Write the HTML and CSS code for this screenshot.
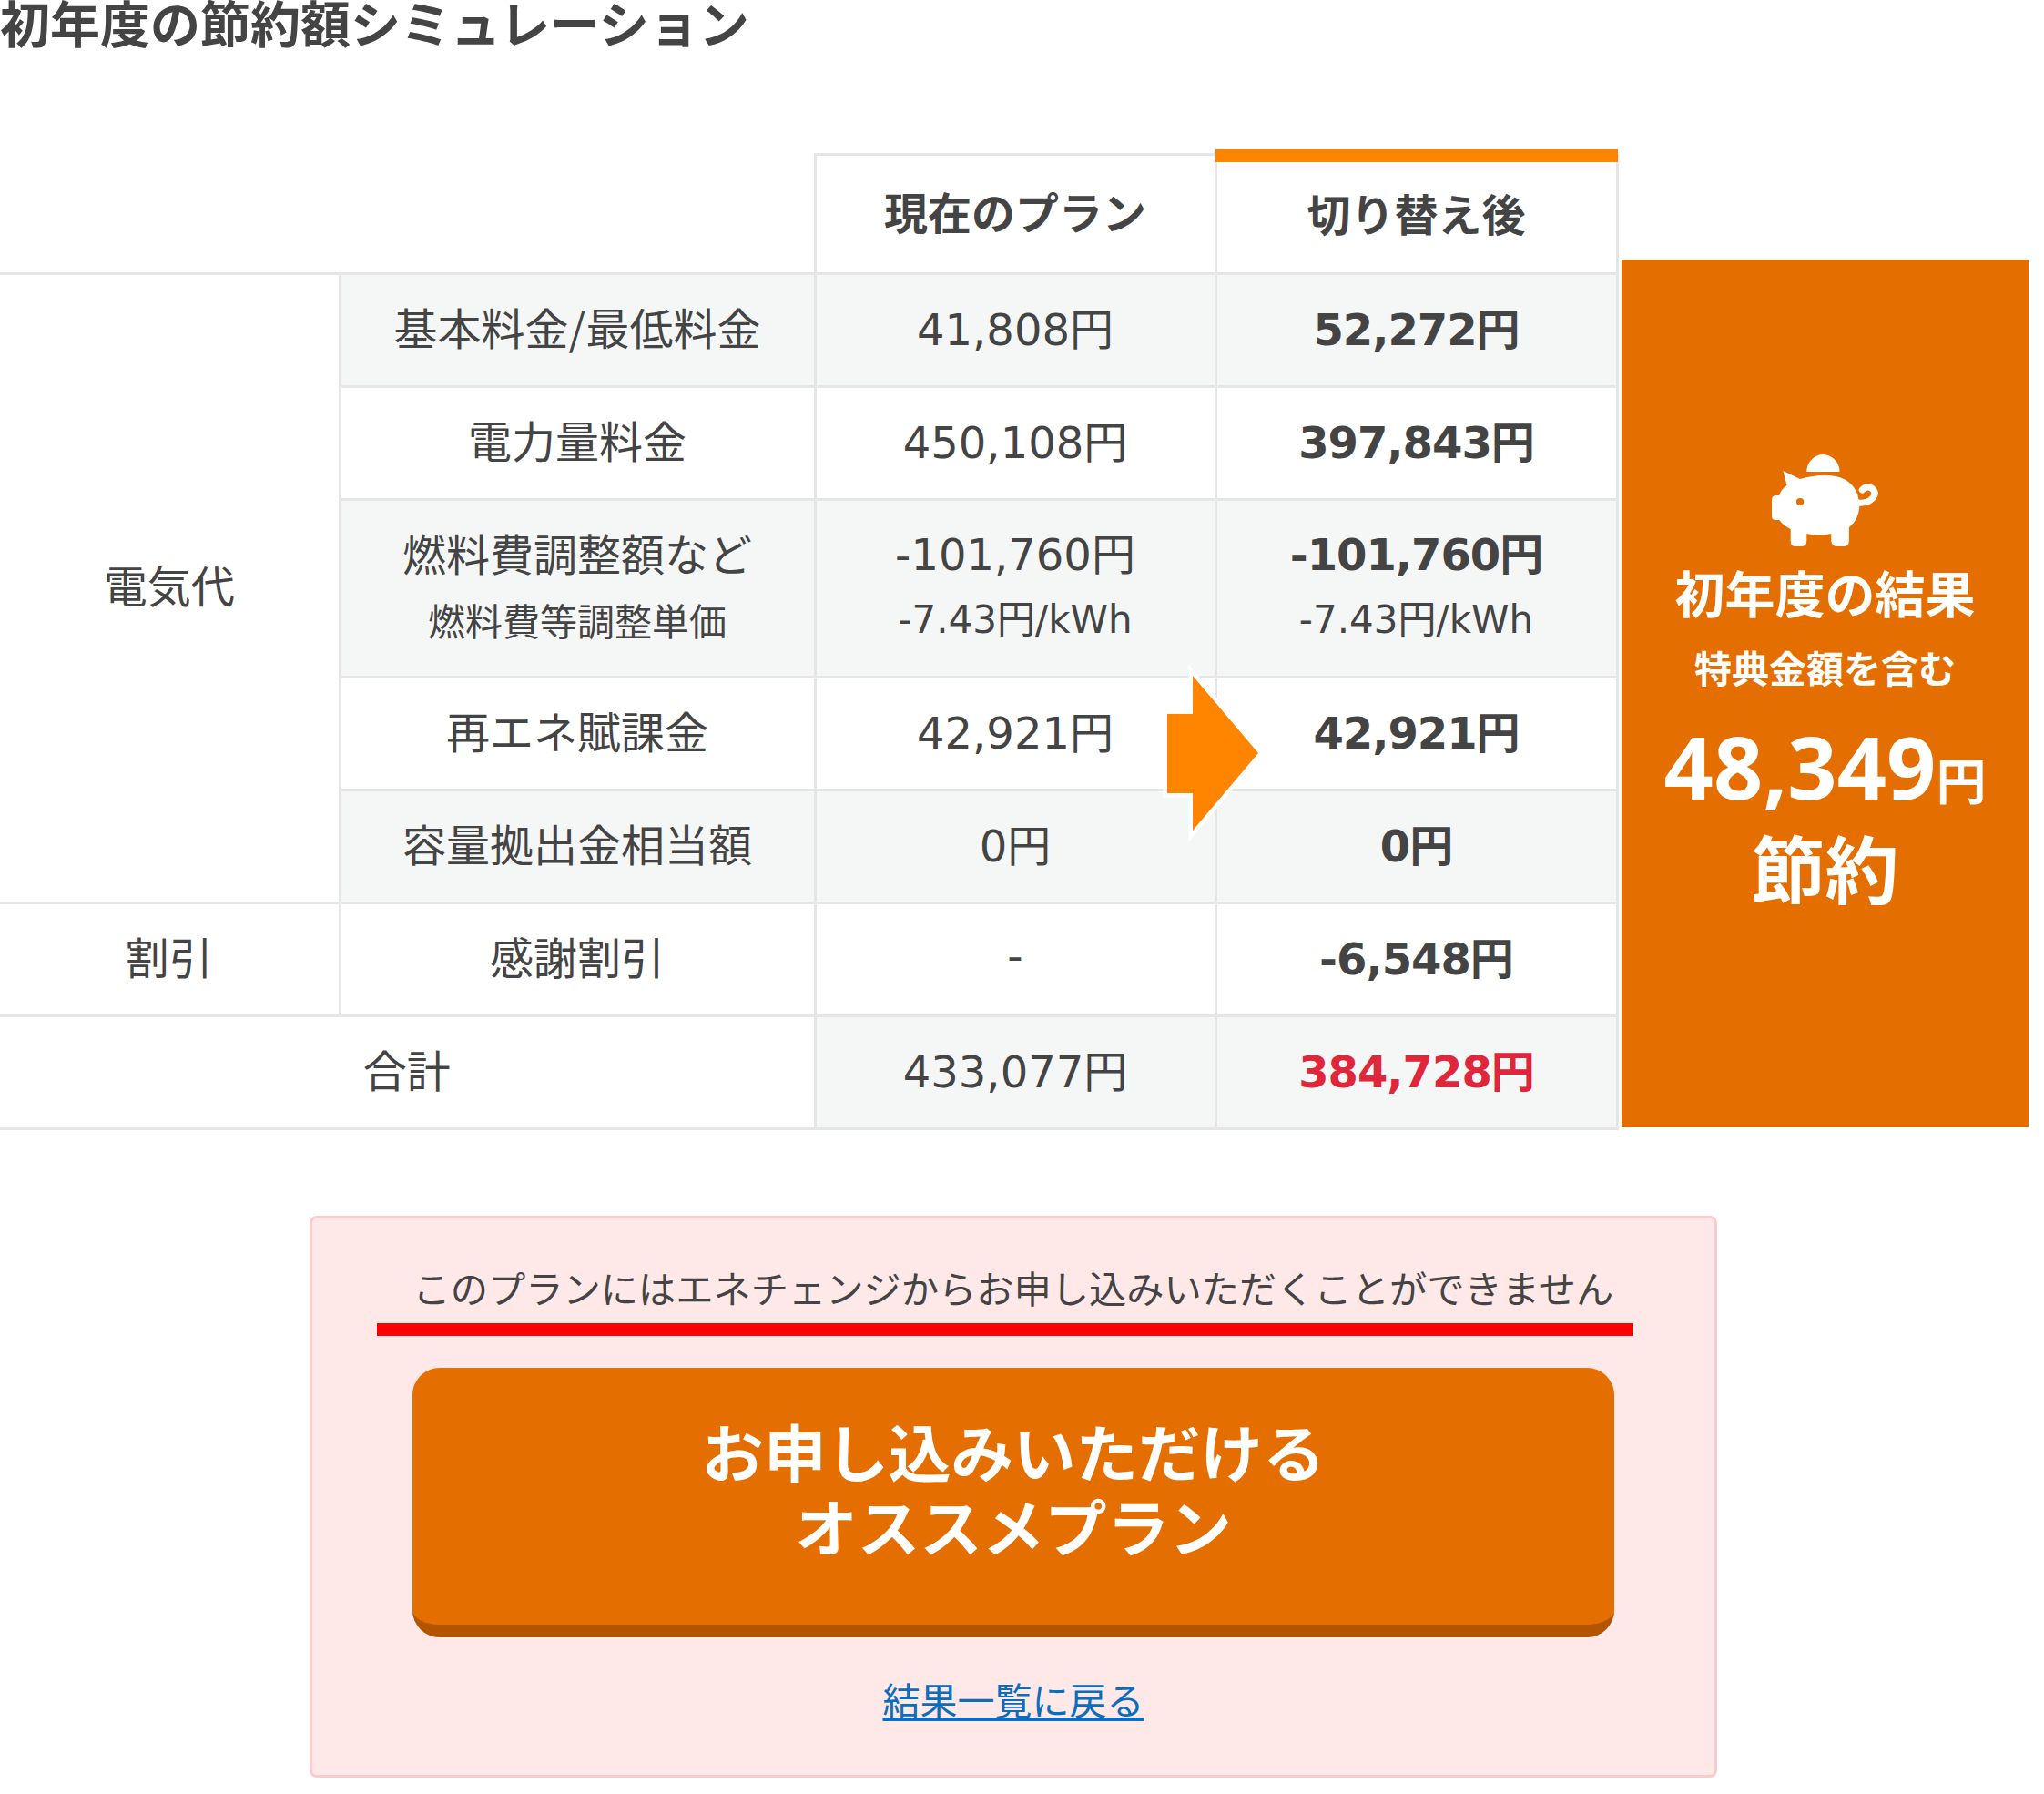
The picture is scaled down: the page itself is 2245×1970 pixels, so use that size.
FILE: index.html
```html
<!DOCTYPE html>
<html lang="ja">
<head>
<meta charset="utf-8">
<title>初年度の節約額シミュレーション</title>
<link rel="stylesheet" href="styles.css">
</head>
<body>
<main class="page">
  <h2 class="title">初年度の節約額シミュレーション</h2>
  <section class="result">
    <div class="table-wrap">
      <table class="sim">
        <colgroup><col class="c1"><col class="c2"><col class="c3"><col class="c4"></colgroup>
        <thead>
          <tr class="head">
            <th class="blank" colspan="2"></th>
            <th class="now">現在のプラン</th>
            <th class="after">切り替え後</th>
          </tr>
        </thead>
        <tbody>
          <tr class="alt">
            <td class="group" rowspan="5">電気代</td>
            <td class="item">基本料金/最低料金</td>
            <td>41,808円</td>
            <td class="new">52,272円</td>
          </tr>
          <tr>
            <td class="item">電力量料金</td>
            <td>450,108円</td>
            <td class="new">397,843円</td>
          </tr>
          <tr class="alt tall">
            <td class="item">燃料費調整額など<span class="sub">燃料費等調整単価</span></td>
            <td>-101,760円<span class="sub">-7.43円/kWh</span></td>
            <td class="new">-101,760円<span class="sub">-7.43円/kWh</span></td>
          </tr>
          <tr>
            <td class="item">再エネ賦課金</td>
            <td>42,921円</td>
            <td class="new">42,921円</td>
          </tr>
          <tr class="alt">
            <td class="item">容量拠出金相当額</td>
            <td>0円</td>
            <td class="new">0円</td>
          </tr>
          <tr>
            <td class="group">割引</td>
            <td class="item">感謝割引</td>
            <td>-</td>
            <td class="new">-6,548円</td>
          </tr>
          <tr class="alt total">
            <td class="sum-label" colspan="2">合計</td>
            <td>433,077円</td>
            <td class="new red">384,728円</td>
          </tr>
        </tbody>
      </table>
      <svg class="arrow" viewBox="0 0 120 200" aria-hidden="true">
        <polygon points="10,57 38,57 38,15 110,100 38,185 38,144 10,144" fill="#ff8400" stroke="#fff" stroke-width="9" paint-order="stroke"/>
      </svg>
    </div>
    <aside class="panel">
      <svg class="pig" viewBox="0 0 114 102" preserveAspectRatio="none" aria-hidden="true">
        <path fill="#fff" d="M37 19C37 8 46 0 54 0C63 0 72 8 72 19Z"/>
        <path fill="#fff" d="M12 18L30 27Q50 21 68 24Q93 30 93 58Q92 72 82 80L82 95Q82 101 76 101L69 101Q64 101 63 95L63 87Q50 90 37 87L37 95Q37 101 31 101L25 101Q20 101 20 95L20 82Q12 78 8 72L4 72Q0 72 0 68L0 50Q0 45 5 45L8 45Q10 38 16 34Z"/>
        <circle cx="30" cy="52" r="4" fill="#e56e00"/>
        <path fill="none" stroke="#fff" stroke-width="7" stroke-linecap="round" d="M91 53Q102 54 107 48Q112 42 106 37Q100 34 96 39"/>
      </svg>
      <p class="p-title">初年度の結果</p>
      <p class="p-sub">特典金額を含む</p>
      <p class="p-amount">48,349<span class="yen">円</span></p>
      <p class="p-save">節約</p>
    </aside>
  </section>
  <section class="notice">
    <p class="notice-text">このプランにはエネチェンジからお申し込みいただくことができません</p>
    <div class="mark"></div>
    <a class="cta" href="#">お申し込みいただける<br>オススメプラン</a>
    <a class="back" href="#">結果一覧に戻る</a>
  </section>
</main>
</body>
</html>
```
FILE: styles.css
```css
* { box-sizing: border-box; }
html, body { margin: 0; padding: 0; background: #fff; }
body {
  height: 1970px;
  overflow: hidden;
  color: #444;
  font-family: "DejaVu Sans", "Noto Sans CJK JP", sans-serif;
  font-size: 48px;
}
.page { width: 2229px; }
.title {
  margin: 0;
  height: 168px;
  font-family: "Noto Sans CJK JP", sans-serif;
  font-size: 55px;
  font-weight: 700;
  line-height: 46px;
  white-space: nowrap;
}
.result { display: flex; align-items: flex-end; gap: 5px; }
.table-wrap { position: relative; width: 1776px; flex: none; }
.sim {
  width: 1776px;
  table-layout: fixed;
  border-collapse: collapse;
  text-align: center;
}
.c1 { width: 373px; }
.c2 { width: 522px; }
.c3 { width: 440px; }
.c4 { width: 441px; }
.sim th, .sim td {
  border: 3px solid #e6e6e6;
  padding: 0;
  font-weight: 400;
  vertical-align: middle;
}
.sim td { padding-bottom: 10px; }
.sim tr > :first-child { border-left: 0; }
.head { height: 131px; }
.sim tbody tr { height: 124px; }
.sim tbody tr.tall { height: 195px; }
.sim tbody tr.tall td { padding-bottom: 17px; }
.sim .blank { border-top: 0; border-left: 0; }
.sim .now, .sim .after { font-weight: 700; font-family: "Noto Sans CJK JP", sans-serif; font-size: 48px; }
.sim .now { padding-bottom: 8px; }
.sim .after { position: relative; padding-bottom: 3px; border-top: 0; }
.sim .after::before {
  content: "";
  position: absolute;
  left: -2px;
  right: -2px;
  top: -6px;
  height: 14px;
  background: #ff8400;
}
.alt td { background: #f5f7f7; }
.sim .group, .sim .sum-label { background: #fff; font-family: "Noto Sans CJK JP", sans-serif; }
.sim .item { font-family: "Noto Sans CJK JP", sans-serif; }
.sim .new { font-weight: 700; letter-spacing: -1px; }
.sim .red { color: #e0263a; }
.sub { display: block; font-size: 41px; font-weight: 400; letter-spacing: 0; line-height: 50px; margin-top: 14px; }
.tall td:not(.item) .sub { font-size: 42px; margin-top: 16px; }
.arrow {
  position: absolute;
  left: 1272px;
  top: 559px;
  width: 120px;
  height: 200px;
}
.panel {
  flex: none;
  width: 447px;
  height: 953px;
  margin-bottom: 3px;
  padding-top: 214px;
  background: #e56e00;
  color: #fff;
  text-align: center;
  font-family: "Noto Sans CJK JP", sans-serif;
  font-weight: 700;
}
.pig { display: block; width: 118px; height: 102px; margin: 0 auto; }
.panel p { margin: 0; }
.panel .p-title { font-size: 55px; line-height: 70px; margin-top: 13px; }
.panel .p-sub { font-size: 41px; line-height: 60px; margin-top: 18px; }
.panel .p-amount { font-family: "Noto Sans", sans-serif; font-size: 95px; line-height: 100px; margin-top: 29px; }
.yen { font-family: "Noto Sans CJK JP", sans-serif; font-size: 55px; }
.panel .p-save { font-size: 81px; line-height: 90px; margin-top: 2px; }
.notice {
  width: 1546px;
  height: 617px;
  margin: 94px 0 0 340px;
  padding: 50px 110px 0;
  background: #fee8e8;
  border: 3px solid #fbcaca;
  border-radius: 8px;
  text-align: center;
}
.notice-text {
  margin: 0;
  font-family: "Noto Sans CJK JP", sans-serif;
  font-size: 41.25px;
  line-height: 50px;
  white-space: nowrap;
}
.mark {
  width: 1380px;
  height: 14px;
  margin: 15px 0 0 -39px;
  background: #f00;
}
.cta {
  display: block;
  height: 296px;
  margin-top: 35px;
  padding-top: 50px;
  border-bottom: 14px solid #b35500;
  border-radius: 30px;
  background: #e56e00;
  color: #fff;
  font-family: "Noto Sans CJK JP", sans-serif;
  font-size: 68.5px;
  font-weight: 700;
  line-height: 82px;
  text-decoration: none;
}
.back {
  display: inline-block;
  margin-top: 40px;
  color: #0a6ebd;
  font-family: "Noto Sans CJK JP", sans-serif;
  font-size: 41px;
  line-height: 54px;
  text-decoration: underline;
}
```
